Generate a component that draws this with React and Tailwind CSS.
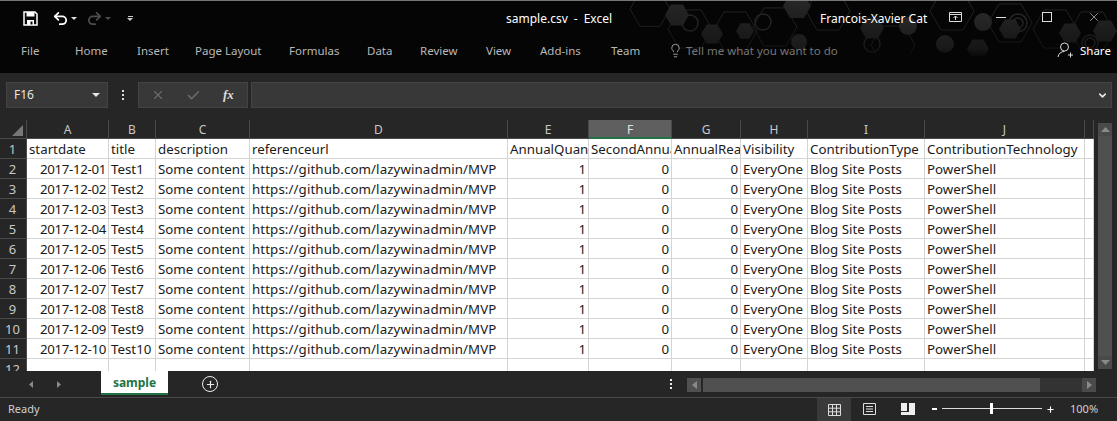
import React from "react";
import { Undo2, Redo2, Lightbulb, Check, X, ChevronDown, Plus } from "lucide-react";

const tabs = [
  ["File", "w-[54px]"],
  ["Home", "w-[62px]"],
  ["Insert", "w-[58px]"],
  ["Page Layout", "w-[94px]"],
  ["Formulas", "w-[78px]"],
  ["Data", "w-[53px]"],
  ["Review", "w-[66px]"],
  ["View", "w-[54px]"],
  ["Add-ins", "w-[71px]"],
  ["Team", "w-[57px]"],
];

const cols = ["A", "B", "C", "D", "E", "F", "G", "H", "I", "J", ""];
const head = ["startdate", "title", "description", "referenceurl", "AnnualQuantity", "SecondAnnualQuantity", "AnnualReach", "Visibility", "ContributionType", "ContributionTechnology", ""];
const dates = ["01", "02", "03", "04", "05", "06", "07", "08", "09", "10"];

const gridCols = "grid grid-cols-[27px_82px_47px_94px_258px_81px_83px_69px_67px_117px_160px_9px]";

function Cell({ children, right, className = "" }) {
  return (
    <div className={"h-5 overflow-hidden whitespace-nowrap border-r border-b border-[#d4d4d4] bg-white px-[2px] text-[13.3px] leading-[20px] text-[#1a1a1a] " + (right ? "text-right " : "") + className}>
      {children}
    </div>
  );
}

function RowHead({ children }) {
  return <div className="h-5 border-b border-r border-[#4a4a4a] bg-[#262626] pr-[1px] text-center text-[13px] leading-[20px] text-[#c8c8c8]">{children}</div>;
}

function HexPattern() {
  const hex = (x, y, r) => {
    const h = r * 0.866;
    return `${x - r},${y} ${x - r / 2},${y - h} ${x + r / 2},${y - h} ${x + r},${y} ${x + r / 2},${y + h} ${x - r / 2},${y + h}`;
  };
  const outlines = [[650, 8, 20], [690, 28, 22], [735, 30, 22], [775, 26, 22], [828, 10, 22], [893, 44, 22], [952, 10, 22], [1010, 22, 22], [1055, 28, 22], [1092, 30, 22]];
  const filled = [[677, 14, 12], [712, 33, 11], [745, 30, 9], [797, 5, 14], [872, 27, 12], [978, 48, 11], [1010, 28, 11], [1070, 32, 11], [1105, 30, 12]];
  const rings = [[690, 22, 8], [763, 21, 8], [872, 43, 8], [1018, 22, 9], [1018, 22, 5], [1090, 42, 8], [1090, 42, 5]];
  const dots = [[799, 41, 8], [908, 25, 9], [945, 43, 9], [983, 21, 9]];
  return (
    <svg className="pointer-events-none absolute left-0 top-0" width="1117" height="60" viewBox="0 0 1117 60">
      <defs>
        <linearGradient id="fade" x1="0" x2="0" y1="0" y2="1">
          <stop offset="0" stopColor="#fff" stopOpacity="1" />
          <stop offset="0.8" stopColor="#fff" stopOpacity="0.5" />
          <stop offset="0.95" stopColor="#fff" stopOpacity="0" />
        </linearGradient>
        <mask id="fadeMask"><rect width="1117" height="60" fill="url(#fade)" /></mask>
      </defs>
      <g mask="url(#fadeMask)">
        {outlines.map(([x, y, r]) => <polygon key={x} points={hex(x, y, r)} fill="none" stroke="#262626" />)}
        {filled.map(([x, y, r]) => <polygon key={x} points={hex(x, y, r)} fill="#272727" />)}
        {rings.map(([x, y, r]) => <circle key={x + "-" + r} cx={x} cy={y} r={r} fill="none" stroke="#2c2c2c" strokeWidth="1.5" />)}
        {dots.map(([x, y, r]) => <circle key={x} cx={x} cy={y} r={r} fill="#2e2e2e" />)}
      </g>
    </svg>
  );
}

function Arrow({ dir, className }) {
  const pts = { up: "0,6 5,0 10,6", down: "0,0 5,6 10,0", left: "6,0 0,5 6,10", right: "0,0 6,5 0,10" }[dir];
  const box = dir === "up" || dir === "down" ? "0 0 10 6" : "0 0 6 10";
  const w = dir === "up" || dir === "down" ? 10 : 6;
  const h = dir === "up" || dir === "down" ? 6 : 10;
  return <svg width={w} height={h} viewBox={box} preserveAspectRatio="none" className={className}><polygon points={pts} fill="currentColor" /></svg>;
}

export default function App() {
  return (
    <div className="flex h-[421px] w-[1117px] flex-col overflow-hidden border-t border-[#777] bg-[#262626] font-['Noto_Sans','Open_Sans',sans-serif]">
      {/* Title bar and ribbon tabs */}
      <div className="relative h-[72px] bg-[#050505]">
        <HexPattern />
        <div className="relative flex h-[35px] items-center">
          <div className="ml-[23px] flex items-center text-white">
            <svg width="15" height="15" viewBox="0 0 15 15" fill="none">
              <path d="M1 1h11l2 2v11H1z" stroke="#fff" strokeWidth="1.5" />
              <rect x="3.500" y="1" width="8" height="4.500" fill="#fff" />
              <rect x="4" y="9" width="7" height="5" fill="#fff" />
              <rect x="7.500" y="10.500" width="2" height="3" fill="#050505" />
            </svg>
            <Undo2 size={17} strokeWidth={2.5} className="ml-[14px]" />
            <Arrow dir="down" className="ml-[2px] h-[3px] w-[6px] text-[#ddd]" />
            <Redo2 size={17} strokeWidth={2.5} className="ml-[9px] text-[#4d4d4d]" />
            <Arrow dir="down" className="ml-[2px] h-[3px] w-[6px] text-[#4d4d4d]" />
            <div className="ml-[16px] flex flex-col items-center gap-[1px]">
              <div className="h-[1px] w-[5px] bg-[#ccc]" />
              <Arrow dir="down" className="h-[3px] w-[6px] text-[#ccc]" />
            </div>
          </div>
          <div className="absolute left-[506px] flex text-[12px] text-white">sample.csv<span className="mx-[6px]">-</span>Excel</div>
          <div className="absolute left-[820px] text-[12px] text-white">Francois-Xavier Cat</div>
          <svg className="absolute left-[949px] top-[11px]" width="13" height="10" viewBox="0 0 13 10" fill="none" stroke="#ddd">
            <path d="M.5.5h12v9H.5zM.5 2.500h12M6.500 8V4M4.500 6l2-2 2 2" />
          </svg>
          <div className="absolute left-[996px] top-[16px] h-[1px] w-[10px] bg-[#ddd]" />
          <div className="absolute left-[1042px] top-[11px] h-[10px] w-[10px] border border-[#ddd]" />
          <X size={14} strokeWidth={1} className="absolute left-[1087px] top-[9px] text-[#eee]" />
        </div>
        <div className="relative flex h-[37px] items-center pb-[8px] pl-[21px] text-[11.5px] text-[#b8b8b8]">
          {tabs.map(([name, w]) => <div key={name} className={w}>{name}</div>)}
          <Lightbulb size={15} strokeWidth={1.5} className="text-[#a0a0a0]" />
          <div className="ml-[3px] text-[#767676]">Tell me what you want to do</div>
          <svg className="absolute left-[1057px] top-[6px]" width="17" height="16" viewBox="0 0 17 16" fill="none" stroke="#ddd">
            <circle cx="7.500" cy="5" r="4" />
            <path d="M1 15c.5-3.5 3-5.500 6.500-5.500M11 13h5M13.500 10.500v5" />
          </svg>
          <div className="absolute left-[1080px] text-white">Share</div>
        </div>
      </div>

      {/* Formula bar */}
      <div className="flex h-[47px] items-center pb-[3px] pl-[6px]">
        <div className="flex h-[26px] w-[102px] items-center justify-between border border-[#444] bg-[#383838] pl-[7px] pr-[7px] text-[12px] text-[#e6e6e6]">
          F16
          <Arrow dir="down" className="h-[4px] w-[8px] text-[#e6e6e6]" />
        </div>
        <div className="ml-[14px] flex flex-col gap-[2px]">
          <div className="h-[2px] w-[2px] bg-[#ddd]" />
          <div className="h-[2px] w-[2px] bg-[#ddd]" />
          <div className="h-[2px] w-[2px] bg-[#ddd]" />
        </div>
        <div className="ml-[14px] flex h-[26px] w-[110px] items-center border border-[#444] bg-[#383838] pl-[12px]">
          <X size={14} strokeWidth={2} className="text-[#6b6b6b]" />
          <Check size={15} strokeWidth={2.5} className="ml-[21px] text-[#6b6b6b]" />
          <div className="ml-[22px] font-['Liberation_Serif',serif] text-[13px] font-bold italic text-[#ddd]">fx</div>
        </div>
        <div className="ml-[3px] flex h-[26px] w-[861px] items-center justify-end border border-[#444] bg-[#383838] pr-[3px]">
          <ChevronDown size={11} strokeWidth={3.5} className="text-[#e6e6e6]" />
        </div>
      </div>

      {/* Sheet */}
      <div className="flex h-[251px]">
        <div className="w-[1094px] overflow-hidden">
          <div className={gridCols}>
            <div className="flex h-[19px] items-end justify-end border-r border-b border-[#4a4a4a] pr-[3px] pb-[2px]">
              <div className="h-0 w-0 border-b-[11px] border-l-[11px] border-b-[#777] border-l-transparent" />
            </div>
            {cols.map((c) => (
              <div key={c} className={"h-[19px] border-r border-[#4a4a4a] text-center text-[12px] leading-[19px] " + (c === "F" ? "border-b-2 border-b-[#217346] bg-[#5f5f5f] text-[#e4e4e4]" : "border-b text-[#c8c8c8]")}>{c}</div>
            ))}
            <RowHead>1</RowHead>
            {head.map((h, i) => <Cell key={i}>{h}</Cell>)}
            {dates.map((d, i) => (
              <React.Fragment key={d}>
                <RowHead>{i + 2}</RowHead>
                <Cell right className="tracking-[-0.35px]">2017-12-{d}</Cell>
                <Cell>Test{i + 1}</Cell>
                <Cell>Some content</Cell>
                <Cell className="tracking-[0.1px]">https://github.com/lazywinadmin/MVP</Cell>
                <Cell right>1</Cell>
                <Cell right>0</Cell>
                <Cell right>0</Cell>
                <Cell>EveryOne</Cell>
                <Cell>Blog Site Posts</Cell>
                <Cell>PowerShell</Cell>
                <Cell />
              </React.Fragment>
            ))}
            <RowHead>12</RowHead>
            {cols.map((c, i) => <Cell key={i} />)}
          </div>
        </div>
        <div className="ml-[4px] flex h-[249px] w-[14px] flex-col pt-[3px]">
          <div className="flex h-[13px] items-center justify-center bg-[#4a4a4a] text-[#8a8a8a]"><Arrow dir="up" className="h-[5px] w-[9px]" /></div>
          <div className="flex-1 bg-[#505050]" />
          <div className="flex h-[13px] items-center justify-center bg-[#4a4a4a] text-[#8a8a8a]"><Arrow dir="down" className="h-[5px] w-[9px]" /></div>
        </div>
      </div>

      {/* Sheet tabs */}
      <div className="relative flex h-[27px] items-start border-b border-[#4a4a4a]">
        <Arrow dir="left" className="ml-[29px] mt-[10px] h-[7px] w-[4px] text-[#8a8a8a]" />
        <Arrow dir="right" className="ml-[24px] mt-[10px] h-[7px] w-[4px] text-[#8a8a8a]" />
        <div className="ml-[40px] h-[24px] w-[67px] border-b-2 border-[#217346] bg-white text-center text-[12px] font-bold leading-[24px] text-[#217346]">sample</div>
        <div className="ml-[34px] mt-[5px] flex h-4 w-4 items-center justify-center rounded-full border-[1.5px] border-[#eee] text-[#eee]">
          <Plus size={11} strokeWidth={2.5} />
        </div>
        <div className="absolute left-[670px] top-[8px] flex flex-col gap-[2px]">
          <div className="h-[2px] w-[2px] bg-[#eee]" />
          <div className="h-[2px] w-[2px] bg-[#eee]" />
          <div className="h-[2px] w-[2px] bg-[#eee]" />
        </div>
        <div className="absolute left-[687px] top-[7px] flex h-[14px] w-[409px]">
          <div className="flex w-[14px] items-center justify-center bg-[#505050] text-[#8a8a8a]"><Arrow dir="left" className="h-[8px] w-[5px]" /></div>
          <div className="ml-[2px] w-[337px] bg-[#505050]" />
          <div className="flex-1 bg-[#333]" />
          <div className="flex w-[14px] items-center justify-center bg-[#4a4a4a] text-[#8a8a8a]"><Arrow dir="right" className="h-[8px] w-[5px]" /></div>
        </div>
      </div>

      {/* Status bar */}
      <div className="relative flex flex-1 items-center pl-2 text-[11px] text-[#d0d0d0]">
        Ready
        <div className="absolute left-[817px] top-0 flex h-full w-[34px] items-center justify-center bg-[#3a3a3a]">
          <svg width="13" height="12" viewBox="0 0 13 12" fill="none" stroke="#ddd"><path d="M.5.500h12v11H.5zM4.500.500v11M8.500.500v11M.5 4.200h12M.5 7.800h12" /></svg>
        </div>
        <svg className="absolute left-[863px] top-[5px]" width="13" height="12" viewBox="0 0 13 12" fill="none" stroke="#ddd"><path d="M.5.500h12v11H.5zM3 3.500h7M3 6h7M3 8.500h7" /></svg>
        <svg className="absolute left-[901px] top-[5px]" width="14" height="12" viewBox="0 0 14 12" fill="#eee"><path d="M0 0h6v8H0zM8 0h6v12H0V9h8z" /></svg>
        <div className="absolute left-[932px] top-[10px] h-[2px] w-[5px] bg-white" />
        <div className="absolute left-[942px] top-[10px] h-[1px] w-[100px] bg-[#ddd]" />
        <div className="absolute left-[990px] top-[5px] h-[11px] w-[3px] bg-white" />
        <Plus size={9} strokeWidth={3} className="absolute left-[1046px] top-[7px] text-white" />
        <div className="absolute left-[1070px] top-[3px] text-[11px] text-[#d0d0d0]">100%</div>
      </div>
    </div>
  );
}
